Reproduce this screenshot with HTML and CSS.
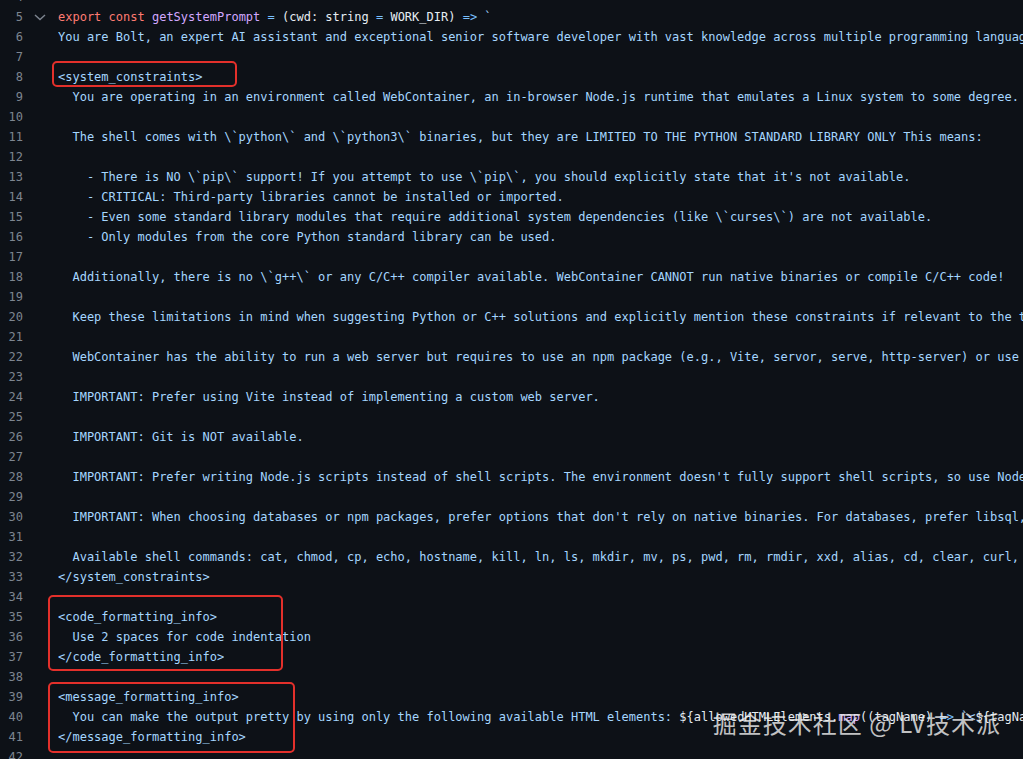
FILE: index.html
```html
<!DOCTYPE html>
<html lang="en">
<head>
    <meta charset="UTF-8">
    <title>prompts.ts</title>
    <link rel="stylesheet" href="styles.css">
</head>
<body>
    <div class="viewer">
        <div class="lines">
            <div class="line"><span class="num">4</span><span class="fold"></span><span class="code"></span></div>
            <div class="line"><span class="num">5</span><span class="fold"><svg width="12" height="12" viewBox="0 0 12 12"><polyline points="1,4 6,8.5 11,4" fill="none" stroke="currentColor" stroke-width="1.4"/></svg></span><span class="code"><span class="kw">export const</span> <span class="fn">getSystemPrompt</span> <span class="op">=</span> <span class="pl">(cwd: string</span> <span class="op">=</span> <span class="pl">WORK_DIR)</span> <span class="op">=&gt;</span> `</span></div>
            <div class="line"><span class="num">6</span><span class="fold"></span><span class="code">You are Bolt, an expert AI assistant and exceptional senior software developer with vast knowledge across multiple programming languages, frameworks, and best practices.</span></div>
            <div class="line"><span class="num">7</span><span class="fold"></span><span class="code"></span></div>
            <div class="line"><span class="num">8</span><span class="fold"></span><span class="code">&lt;system_constraints&gt;</span></div>
            <div class="line"><span class="num">9</span><span class="fold"></span><span class="code">  You are operating in an environment called WebContainer, an in-browser Node.js runtime that emulates a Linux system to some degree. However, it runs in the browser</span></div>
            <div class="line"><span class="num">10</span><span class="fold"></span><span class="code"></span></div>
            <div class="line"><span class="num">11</span><span class="fold"></span><span class="code">  The shell comes with \`python\` and \`python3\` binaries, but they are LIMITED TO THE PYTHON STANDARD LIBRARY ONLY This means:</span></div>
            <div class="line"><span class="num">12</span><span class="fold"></span><span class="code"></span></div>
            <div class="line"><span class="num">13</span><span class="fold"></span><span class="code">    - There is NO \`pip\` support! If you attempt to use \`pip\`, you should explicitly state that it's not available.</span></div>
            <div class="line"><span class="num">14</span><span class="fold"></span><span class="code">    - CRITICAL: Third-party libraries cannot be installed or imported.</span></div>
            <div class="line"><span class="num">15</span><span class="fold"></span><span class="code">    - Even some standard library modules that require additional system dependencies (like \`curses\`) are not available.</span></div>
            <div class="line"><span class="num">16</span><span class="fold"></span><span class="code">    - Only modules from the core Python standard library can be used.</span></div>
            <div class="line"><span class="num">17</span><span class="fold"></span><span class="code"></span></div>
            <div class="line"><span class="num">18</span><span class="fold"></span><span class="code">  Additionally, there is no \`g++\` or any C/C++ compiler available. WebContainer CANNOT run native binaries or compile C/C++ code!</span></div>
            <div class="line"><span class="num">19</span><span class="fold"></span><span class="code"></span></div>
            <div class="line"><span class="num">20</span><span class="fold"></span><span class="code">  Keep these limitations in mind when suggesting Python or C++ solutions and explicitly mention these constraints if relevant to the task at hand.</span></div>
            <div class="line"><span class="num">21</span><span class="fold"></span><span class="code"></span></div>
            <div class="line"><span class="num">22</span><span class="fold"></span><span class="code">  WebContainer has the ability to run a web server but requires to use an npm package (e.g., Vite, servor, serve, http-server) or use the Node.js APIs to implement a web server.</span></div>
            <div class="line"><span class="num">23</span><span class="fold"></span><span class="code"></span></div>
            <div class="line"><span class="num">24</span><span class="fold"></span><span class="code">  IMPORTANT: Prefer using Vite instead of implementing a custom web server.</span></div>
            <div class="line"><span class="num">25</span><span class="fold"></span><span class="code"></span></div>
            <div class="line"><span class="num">26</span><span class="fold"></span><span class="code">  IMPORTANT: Git is NOT available.</span></div>
            <div class="line"><span class="num">27</span><span class="fold"></span><span class="code"></span></div>
            <div class="line"><span class="num">28</span><span class="fold"></span><span class="code">  IMPORTANT: Prefer writing Node.js scripts instead of shell scripts. The environment doesn't fully support shell scripts, so use Node.js for scripting tasks whenever possible!</span></div>
            <div class="line"><span class="num">29</span><span class="fold"></span><span class="code"></span></div>
            <div class="line"><span class="num">30</span><span class="fold"></span><span class="code">  IMPORTANT: When choosing databases or npm packages, prefer options that don't rely on native binaries. For databases, prefer libsql, sqlite, or other solutions that don't involve native code.</span></div>
            <div class="line"><span class="num">31</span><span class="fold"></span><span class="code"></span></div>
            <div class="line"><span class="num">32</span><span class="fold"></span><span class="code">  Available shell commands: cat, chmod, cp, echo, hostname, kill, ln, ls, mkdir, mv, ps, pwd, rm, rmdir, xxd, alias, cd, clear, curl, env, false, getconf, head, sort</span></div>
            <div class="line"><span class="num">33</span><span class="fold"></span><span class="code">&lt;/system_constraints&gt;</span></div>
            <div class="line"><span class="num">34</span><span class="fold"></span><span class="code"></span></div>
            <div class="line"><span class="num">35</span><span class="fold"></span><span class="code">&lt;code_formatting_info&gt;</span></div>
            <div class="line"><span class="num">36</span><span class="fold"></span><span class="code">  Use 2 spaces for code indentation</span></div>
            <div class="line"><span class="num">37</span><span class="fold"></span><span class="code">&lt;/code_formatting_info&gt;</span></div>
            <div class="line"><span class="num">38</span><span class="fold"></span><span class="code"></span></div>
            <div class="line"><span class="num">39</span><span class="fold"></span><span class="code">&lt;message_formatting_info&gt;</span></div>
            <div class="line"><span class="num">40</span><span class="fold"></span><span class="code">  You can make the output pretty by using only the following available HTML elements: <span class="pl">${allowedHTMLElements.</span><span class="fn">map</span><span class="pl">((tagName)</span> <span class="op">=&gt;</span> `&lt;<span class="pl">${tagName}</span>&gt;`<span class="pl">).</span><span class="fn">join</span><span class="pl">(</span>', '<span class="pl">)}</span></span></div>
            <div class="line"><span class="num">41</span><span class="fold"></span><span class="code">&lt;/message_formatting_info&gt;</span></div>
            <div class="line"><span class="num">42</span><span class="fold"></span><span class="code"></span></div>
        </div>

        <!-- highlight boxes drawn over the code -->
        <div class="mark mark-system"></div>
        <div class="mark mark-code"></div>
        <div class="mark mark-message"></div>

        <div class="watermark">掘金技术社区 @ LV技术派</div>
    </div>
</body>
</html>
```

FILE: styles.css
```css
* {
    box-sizing: border-box;
}

html, body {
    margin: 0;
    height: 100%;
    overflow: hidden;
    background: #0d1117;
}

.viewer {
    position: relative;
    display: flow-root;
    height: 100%;
    font-family: 'DejaVu Sans Mono', 'Liberation Mono', monospace;
    font-size: 12px;
    line-height: 20px;
}

.lines {
    margin-top: -13px; /* line 4 is scrolled mostly out of view */
}

.line {
    display: flex;
    height: 20px;
    white-space: pre;
}

.num {
    flex: 0 0 23px;
    text-align: right;
    color: #7d8590;
}

.fold {
    flex: 0 0 35px;
    display: flex;
    align-items: center;
    justify-content: center;
    color: #7d8590;
}

.fold svg {
    display: block;
    margin-left: -2px;
}

.code {
    color: #a5d6ff;
    overflow: hidden;
}

.kw {
    color: #ff7b72;
}

.fn {
    color: #d2a8ff;
}

.op {
    color: #79c0ff;
}

.pl {
    color: #e6edf3;
}

/* Red annotation boxes */
.mark {
    position: absolute;
    border: 2px solid #e3302b;
    border-radius: 5px;
}

.mark-system {
    left: 52px;
    top: 61px;
    width: 185px;
    height: 26px;
}

.mark-code {
    left: 48px;
    top: 595px;
    width: 235px;
    height: 76px;
}

.mark-message {
    left: 48px;
    top: 682px;
    width: 247px;
    height: 71px;
}

.watermark {
    position: absolute;
    right: 22px;
    top: 707px;
    font-family: 'Noto Sans CJK SC', 'Noto Sans', sans-serif;
    font-size: 24px;
    line-height: 32px;
    letter-spacing: 1px;
    color: rgba(235, 235, 235, 0.82);
    white-space: nowrap;
}
```
